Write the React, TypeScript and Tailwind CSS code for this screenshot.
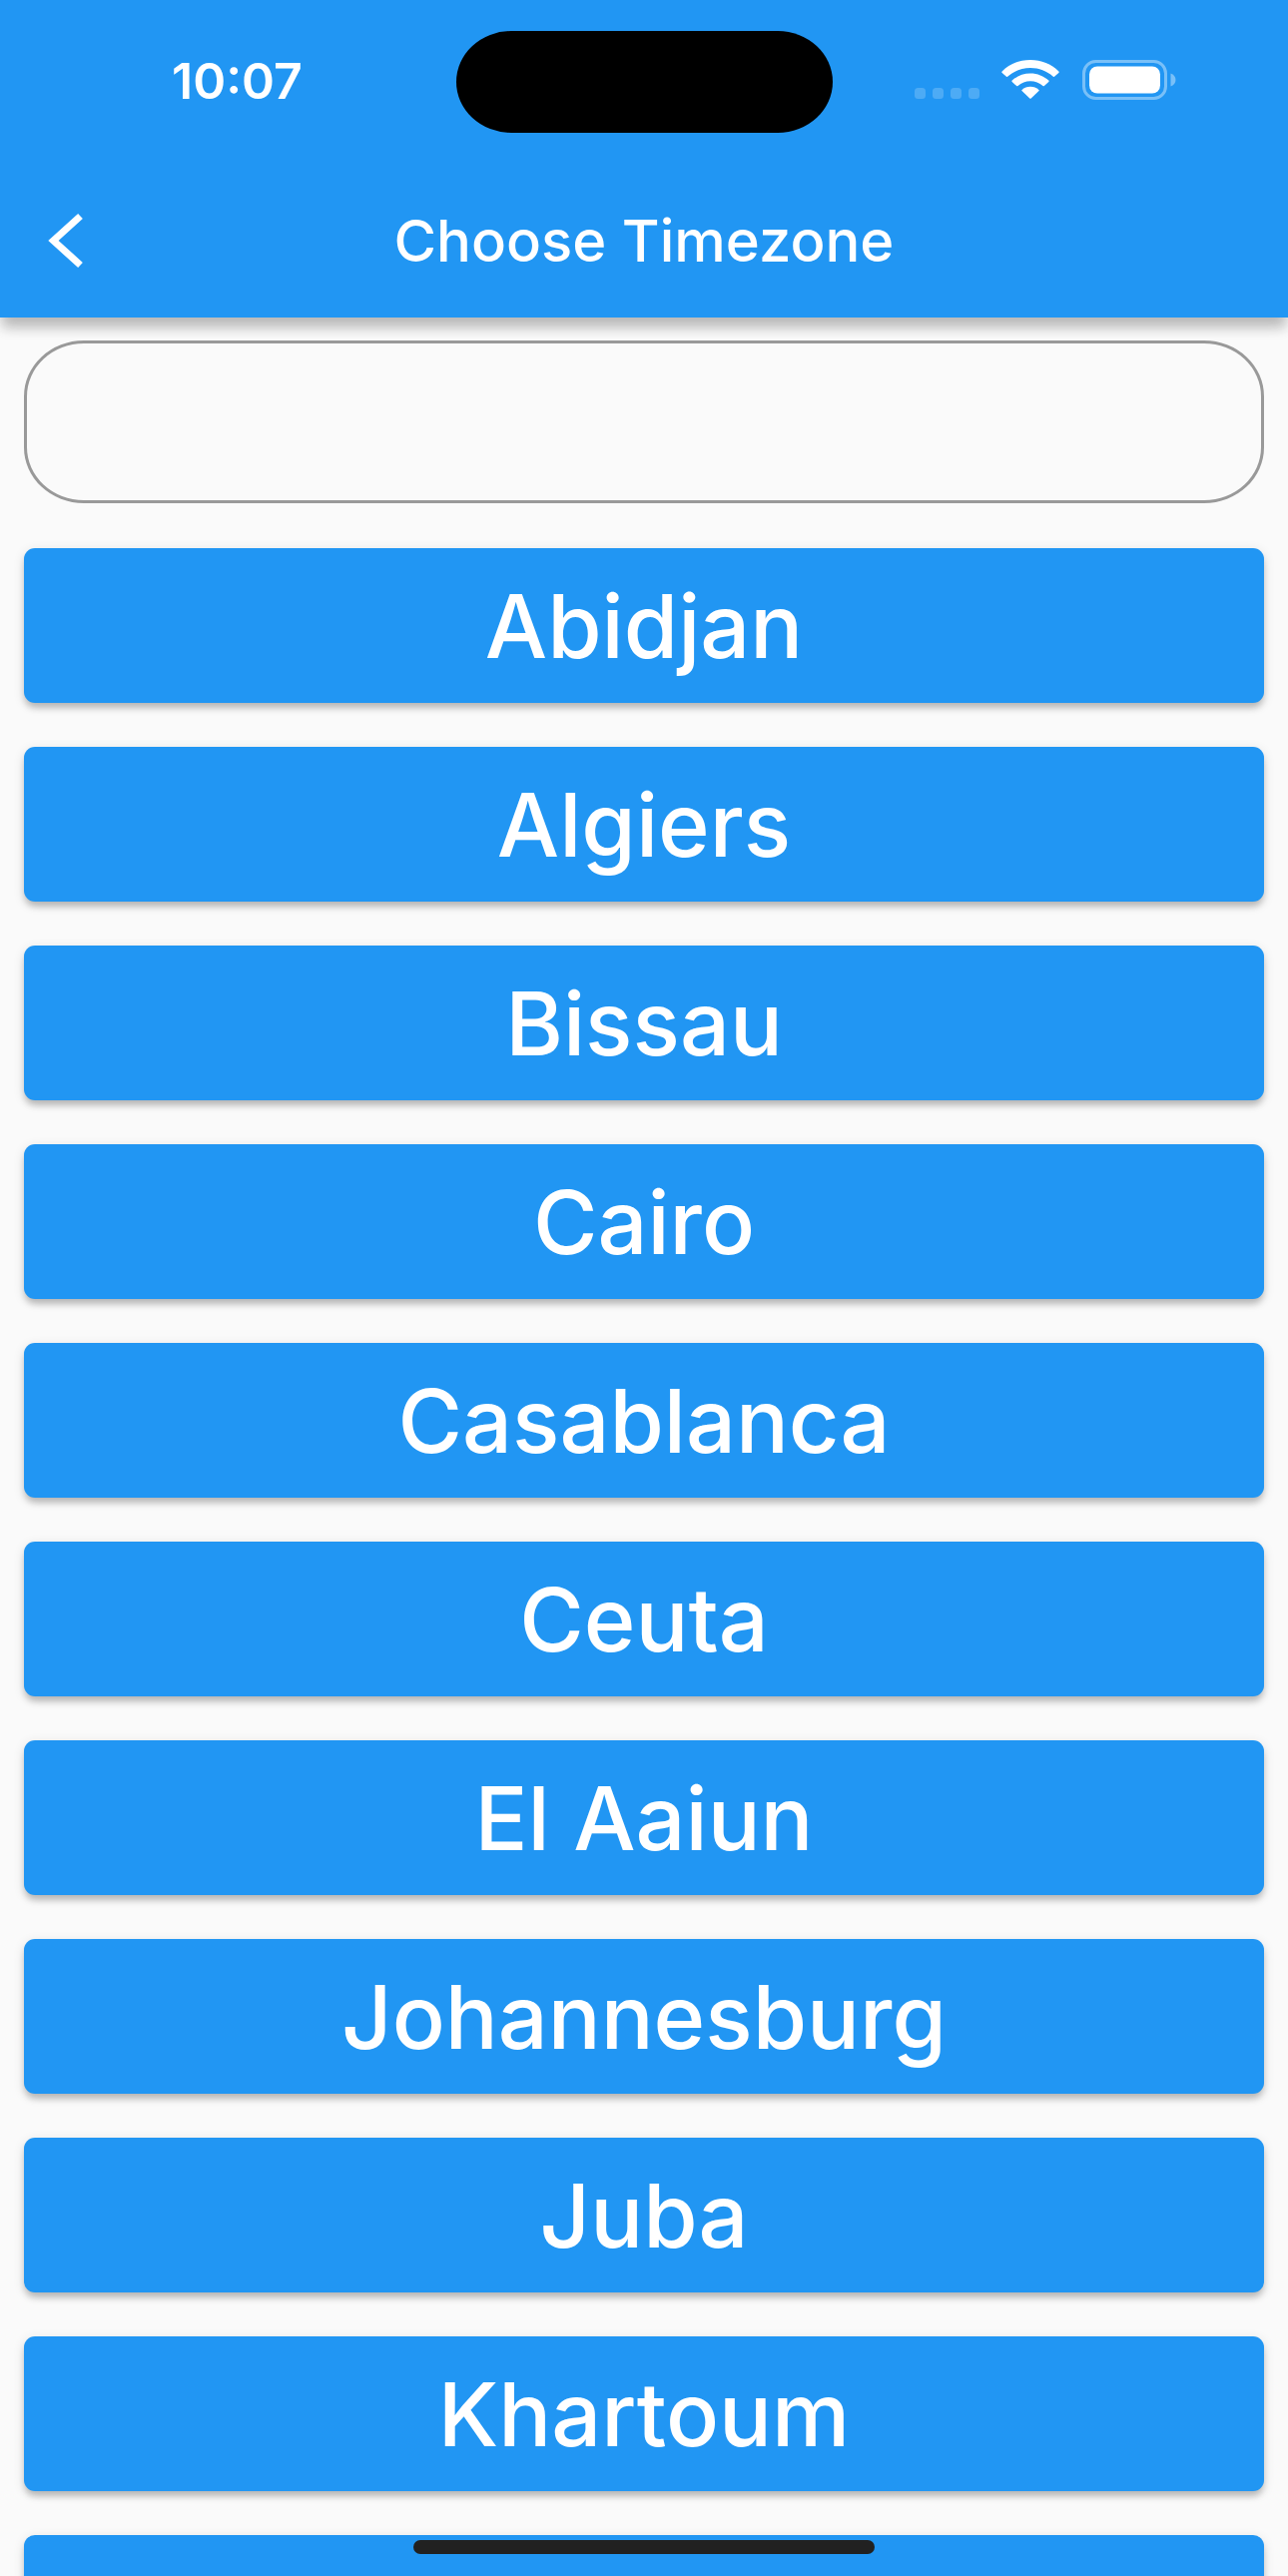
import React, { useState } from "react";

const timezones = [
  "Abidjan",
  "Algiers",
  "Bissau",
  "Cairo",
  "Casablanca",
  "Ceuta",
  "El Aaiun",
  "Johannesburg",
  "Juba",
  "Khartoum",
];

const buttonClass =
  "flex h-[155px] w-full items-center justify-center rounded-[11px] bg-[#2196f3] text-[88px] leading-none font-medium text-white shadow-[0_6px_6px_-1px_rgba(0,0,0,0.2),0_3px_12px_rgba(0,0,0,0.12)]";

function SignalDots() {
  return (
    <svg width="65" height="11" viewBox="0 0 65 11" className="mt-7" fill="#fff" fillOpacity="0.2" aria-hidden="true">
      <rect x="0" width="11" height="11" rx="3.5" />
      <rect x="18" width="11" height="11" rx="3.5" />
      <rect x="36" width="11" height="11" rx="3.5" />
      <rect x="54" width="11" height="11" rx="3.5" />
    </svg>
  );
}

function WifiIcon() {
  return (
    <svg width="58" height="39" viewBox="0 0 58 39" fill="#fff" aria-hidden="true">
      <path d="M29 0C40 0 50 4 57.400 11.500Q58 12.200 57.300 12.900L53 16.700Q52.300 17.200 51.600 16.600C45.500 11 37.500 8 29 8S12.500 11 6.400 16.600Q5.700 17.200 5 16.700L.7 12.900Q0 12.200 .6 11.500C8 4 18 0 29 0Z" />
      <path d="M29 13.400C36 13.400 42.500 16 47.300 20.600Q48 21.300 47.300 21.900L42.900 26Q42.200 26.500 41.500 26C38 23 33.700 21.300 29 21.300S20 23 16.500 26Q15.800 26.500 15.100 26L10.700 21.900Q10 21.300 10.700 20.600C15.500 16 22 13.400 29 13.400Z" />
      <path d="M29 26.700C32.200 26.700 35.200 27.900 37.400 29.900Q38 30.500 37.500 31.100L29.700 38.500Q29 39.100 28.300 38.500L20.500 31.100Q20 30.500 20.600 29.900C22.800 27.900 25.800 26.700 29 26.700Z" />
    </svg>
  );
}

function BatteryIcon() {
  return (
    <svg width="94" height="40" viewBox="0 0 94 40" aria-hidden="true">
      <rect x="1.500" y="1.500" width="82" height="37" rx="12" fill="none" stroke="#fff" strokeOpacity="0.4" strokeWidth="3" />
      <rect x="7" y="6.500" width="71" height="27" rx="8" fill="#fff" />
      <path d="M88.500 13.500C91.500 14.500 93.500 17 93.500 20S91.500 25.500 88.500 26.500Z" fill="#fff" fillOpacity="0.4" />
    </svg>
  );
}

function StatusBar() {
  return (
    <div className="grid h-[164px] grid-cols-[1fr_377px_1fr] items-start pt-[31px]">
      <time className="pt-[25px] pl-[172px] text-[50px] leading-[50px] font-semibold">10:07</time>
      <div className="h-[102px] rounded-[55px/51px] bg-black" />
      <div className="flex justify-end pt-[29px] pr-28">
        <SignalDots />
        <span className="ml-[22px]">
          <WifiIcon />
        </span>
        <span className="ml-[23px]">
          <BatteryIcon />
        </span>
      </div>
    </div>
  );
}

export default function App() {
  const [query, setQuery] = useState("");

  return (
    <div className="relative flex h-screen flex-col overflow-hidden bg-[#fafafa] font-['Inter',sans-serif]">
      <header className="relative z-10 shrink-0 bg-[#2196f3] text-white shadow-[0_12px_12px_-2px_rgba(0,0,0,0.24),0_3px_20px_rgba(0,0,0,0.06)]">
        <StatusBar />
        <div className="grid h-[154px] grid-cols-[168px_1fr_168px] items-center">
          <button type="button" aria-label="Back" className="flex h-full items-center pl-12">
            <svg width="36" height="56" viewBox="0 0 36 56" fill="none" stroke="#fff" strokeWidth="7" aria-hidden="true">
              <path d="M32.500 3.500L5.500 28L32.500 52.500" />
            </svg>
          </button>
          <h1 className="text-center text-[58px] leading-none font-medium">Choose Timezone</h1>
        </div>
      </header>

      <main className="min-h-0 flex-1 overflow-y-auto px-6 pt-[23px] [scrollbar-width:none]">
        <input
          type="text"
          aria-label="Search timezones"
          value={query}
          onChange={(event) => setQuery(event.target.value)}
          className="block h-[163px] w-full rounded-[60px/56px] border-3 border-[#999] bg-transparent px-12 text-[58px] outline-none"
        />
        <ul className="flex flex-col gap-11 pt-[45px]">
          {timezones.map((name) => (
            <li key={name}>
              <button type="button" className={buttonClass}>
                {name}
              </button>
            </li>
          ))}
          <li>
            <button type="button" aria-label="More timezones" className={buttonClass} />
          </li>
        </ul>
      </main>

      <div className="absolute bottom-[22px] left-1/2 z-20 h-[14px] w-[462px] -translate-x-1/2 rounded-full bg-[#212121]" />
    </div>
  );
}
